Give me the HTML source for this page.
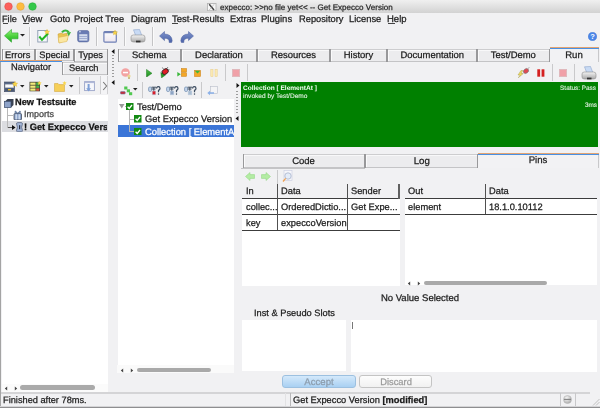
<!DOCTYPE html><html><head><meta charset="utf-8"><style>
html,body{margin:0;padding:0;}
body{width:600px;height:408px;overflow:hidden;position:relative;background:#f1f1f3;font-family:"Liberation Sans",sans-serif;}
div{-webkit-text-stroke:0.25px currentColor;text-rendering:geometricPrecision;will-change:transform;}
</style></head><body>
<div style="position:absolute;left:0px;top:0px;width:600px;height:13px;background:linear-gradient(#f0f0f0,#e4e4e4 40%,#d2d2d2);"></div><svg style="position:absolute;left:4.199999999999999px;top:2.0px" width="9" height="9" viewBox="0 0 9 9"><circle cx="4.5" cy="4.5" r="3.8" fill="#fc605c" stroke="#df4744" stroke-width="0.5"/></svg><svg style="position:absolute;left:15.899999999999999px;top:2.0px" width="9" height="9" viewBox="0 0 9 9"><circle cx="4.5" cy="4.5" r="3.8" fill="#fdbc40" stroke="#de9f34" stroke-width="0.5"/></svg><svg style="position:absolute;left:27.9px;top:2.0px" width="9" height="9" viewBox="0 0 9 9"><circle cx="4.5" cy="4.5" r="3.8" fill="#34c84a" stroke="#27aa35" stroke-width="0.5"/></svg><svg style="position:absolute;left:207px;top:2.8px" width="9.5" height="8.2" viewBox="0 0 9.5 8.2"><rect x="0.5" y="0.5" width="8.5" height="7.2" fill="#f8f8f8" stroke="#b4b4b4" stroke-width="0.9"/><path d="M2.2 1.2 L7 7" stroke="#444" stroke-width="1.5"/><path d="M7.2 1.2 L2.2 7" stroke="#999" stroke-width="0.5"/></svg><div style="left:220px;position:absolute;top:4px;font-size:8.05px;line-height:8.05px;color:#2a2a2a;font-weight:normal;white-space:pre;">expecco: &gt;&gt;no file yet&lt;&lt; -- Get Expecco Version</div><div style="left:2.3px;position:absolute;top:15px;font-size:9.2px;line-height:9.2px;color:#1e1e1e;font-weight:normal;white-space:pre;">File</div><div style="left:22px;position:absolute;top:14px;font-size:9.4px;line-height:9.4px;color:#1e1e1e;font-weight:normal;white-space:pre;">View</div><div style="left:49.6px;position:absolute;top:14px;font-size:9.4px;line-height:9.4px;color:#1e1e1e;font-weight:normal;white-space:pre;">Goto</div><div style="left:74.3px;position:absolute;top:15px;font-size:9.3px;line-height:9.3px;color:#1e1e1e;font-weight:normal;white-space:pre;">Project Tree</div><div style="left:130.5px;position:absolute;top:14px;font-size:9.4px;line-height:9.4px;color:#1e1e1e;font-weight:normal;white-space:pre;">Diagram</div><div style="left:171.6px;position:absolute;top:15px;font-size:9.5px;line-height:9.5px;color:#1e1e1e;font-weight:normal;white-space:pre;">Test-Results</div><div style="left:229.6px;position:absolute;top:15px;font-size:9.3px;line-height:9.3px;color:#1e1e1e;font-weight:normal;white-space:pre;">Extras</div><div style="left:261.3px;position:absolute;top:15px;font-size:9.5px;line-height:9.5px;color:#1e1e1e;font-weight:normal;white-space:pre;">Plugins</div><div style="left:299.3px;position:absolute;top:15px;font-size:9.3px;line-height:9.3px;color:#1e1e1e;font-weight:normal;white-space:pre;">Repository</div><div style="left:349.3px;position:absolute;top:14px;font-size:9.4px;line-height:9.4px;color:#1e1e1e;font-weight:normal;white-space:pre;">License</div><div style="left:387.3px;position:absolute;top:15px;font-size:9.5px;line-height:9.5px;color:#1e1e1e;font-weight:normal;white-space:pre;">Help</div><div style="position:absolute;left:3px;top:23px;width:5px;height:1px;background:#444;"></div><div style="position:absolute;left:23px;top:23px;width:6px;height:1px;background:#444;"></div><div style="position:absolute;left:172px;top:23px;width:6px;height:1px;background:#444;"></div><div style="position:absolute;left:388px;top:23px;width:7px;height:1px;background:#444;"></div><div style="position:absolute;left:0px;top:0px;width:1px;height:408px;background:#a4a4a4;"></div><div style="position:absolute;left:96px;top:27px;width:1px;height:19px;background:#c4c4c6;"></div><div style="position:absolute;left:97px;top:27px;width:1px;height:19px;background:#fbfbfb;"></div><div style="position:absolute;left:124px;top:27px;width:1px;height:19px;background:#c4c4c6;"></div><div style="position:absolute;left:125px;top:27px;width:1px;height:19px;background:#fbfbfb;"></div><div style="position:absolute;left:152px;top:27px;width:1px;height:19px;background:#c4c4c6;"></div><div style="position:absolute;left:153px;top:27px;width:1px;height:19px;background:#fbfbfb;"></div><svg style="position:absolute;left:3.5px;top:29px" width="15" height="14" viewBox="0 0 15 14"><defs><linearGradient id="ga" x1="0" y1="0" x2="0" y2="1"><stop offset="0" stop-color="#9cf07c"/><stop offset="0.55" stop-color="#48d03a"/><stop offset="1" stop-color="#22a822"/></linearGradient></defs><path d="M0.5 6.8 L7.5 0.4 L7.5 3.9 L14 3.9 L14 9.8 L7.5 9.8 L7.5 13.2 Z" fill="url(#ga)" stroke="#2aa82a" stroke-width="0.6"/></svg><svg style="position:absolute;left:19.5px;top:34px" width="5.5" height="3" viewBox="0 0 5.5 3"><path d="M0 0 L5 0 L2.5 2.6 Z" fill="#222"/></svg><div style="position:absolute;left:29px;top:27px;width:1px;height:19px;background:#c8c8ca;"></div><div style="position:absolute;left:30px;top:27px;width:1px;height:19px;background:#fafafa;"></div><svg style="position:absolute;left:37px;top:28.5px" width="13" height="14" viewBox="0 0 13 14"><rect x="0.8" y="1.5" width="9.5" height="11.5" fill="#f6f8fb" stroke="#8a9ab0" stroke-width="0.9"/><path d="M2.3 7.5 L5 10.8 L11 4.5" stroke="#22b622" stroke-width="2" fill="none"/><path d="M10 0.3 L10.8 2 L12.6 2.2 L11.3 3.4 L11.7 5.2 L10 4.3 L8.4 5.2 L8.8 3.4 L7.5 2.2 L9.3 2 Z" fill="#f8d64a" stroke="#d8a818" stroke-width="0.3"/></svg><svg style="position:absolute;left:56.5px;top:29px" width="15" height="15" viewBox="0 0 15 15"><path d="M1 5 L4.5 4 L6 5 L10 4.2 L10.5 11 L2 13.8 Z" fill="#e9c450" stroke="#c99a30" stroke-width="0.5"/><path d="M1.2 8.5 L11.5 6.5 L9.8 12.5 L2 14 Z" fill="#fbe7a2" stroke="#d8b048" stroke-width="0.5"/><path d="M5 3.2 Q8.5 -0.2 11.8 3.2" stroke="#3cb43c" stroke-width="2.2" fill="none"/><path d="M9.8 3.6 L14 3.0 L11.8 7.2 Z" fill="#3cb43c"/></svg><svg style="position:absolute;left:77px;top:30px" width="12.5" height="12.5" viewBox="0 0 12.5 12.5"><rect x="0.6" y="0.6" width="11.3" height="11.3" rx="1.8" fill="#6a7cb4" stroke="#55669c" stroke-width="0.6"/><rect x="2.3" y="0.8" width="1.3" height="1.6" fill="#dfe6f4"/><rect x="2.2" y="4.2" width="8.2" height="6.4" fill="#d4dcee"/><rect x="2.2" y="6.2" width="8.2" height="0.7" fill="#8a98c4"/><rect x="2.2" y="8.3" width="8.2" height="0.7" fill="#8a98c4"/></svg><svg style="position:absolute;left:102.5px;top:29.5px" width="15" height="13" viewBox="0 0 15 13"><defs><linearGradient id="gw" x1="0" y1="0" x2="0" y2="1"><stop offset="0" stop-color="#fbfbfd"/><stop offset="1" stop-color="#ece6ee"/></linearGradient></defs><rect x="0.9" y="1.6" width="12.4" height="10.6" rx="1" fill="url(#gw)" stroke="#6f80b6" stroke-width="1.2"/><rect x="0.9" y="1.6" width="12.4" height="1.6" fill="#6f80b6"/><path d="M12 0 L12.8 1.7 L14.6 1.9 L13.3 3.1 L13.7 4.9 L12 4 L10.4 4.9 L10.8 3.1 L9.5 1.9 L11.3 1.7 Z" fill="#f8d64a" stroke="#d8a818" stroke-width="0.3"/></svg><svg style="position:absolute;left:129.5px;top:28.5px" width="16" height="15" viewBox="0 0 16 15"><defs><linearGradient id="gp" x1="0" y1="0" x2="0" y2="1"><stop offset="0" stop-color="#f4f4f4"/><stop offset="1" stop-color="#a8a8a8"/></linearGradient></defs><path d="M3.5 0.8 L9.5 0.5 L12 7 L6 7.5 Z" fill="#c8daf4" stroke="#8ea6cc" stroke-width="0.6"/><path d="M1 8 Q1 6 3.5 6 L12.5 6 Q15 6 15 8.5 L15 11 Q15 13 12.5 13 L3.5 13 Q1 13 1 11 Z" fill="url(#gp)" stroke="#8c8c8c" stroke-width="0.6"/><rect x="6" y="11.6" width="4.5" height="1.8" fill="#333"/></svg><svg style="position:absolute;left:159px;top:30.5px" width="14" height="12" viewBox="0 0 14 12"><defs><linearGradient id="gu" x1="0" y1="0" x2="0" y2="1"><stop offset="0" stop-color="#7d92cc"/><stop offset="1" stop-color="#4a62a8"/></linearGradient></defs><path d="M0.5 5 L5.5 0.5 L5.5 3 Q12.8 3.2 13.2 9.8 L12.6 11.5 L10.2 11.5 Q10.6 7.2 5.5 7.2 L5.5 9.6 Z" fill="url(#gu)" stroke="#4a5e9c" stroke-width="0.5"/></svg><svg style="position:absolute;left:180px;top:30.5px" width="14" height="12" viewBox="0 0 14 12"><path d="M13.5 5 L8.5 0.5 L8.5 3 Q1.2 3.2 0.8 9.8 L1.4 11.5 L3.8 11.5 Q3.4 7.2 8.5 7.2 L8.5 9.6 Z" fill="url(#gu)" stroke="#4a5e9c" stroke-width="0.5"/></svg><svg style="position:absolute;left:587.5px;top:31.5px" width="9" height="9" viewBox="0 0 9 9"><circle cx="4.5" cy="4.5" r="4.3" fill="#4a86e8" stroke="#3a70cc" stroke-width="0.4"/><text x="4.5" y="7.4" font-size="7.5" font-weight="bold" fill="#fff" text-anchor="middle" font-family="Liberation Sans">?</text></svg><div style="position:absolute;left:2px;top:49px;width:33px;height:12px;background:#ececee;box-sizing:border-box;border-top:1px solid #cdcdcf;border-bottom:1px solid #c4c4c6;"></div><div style="position:absolute;left:2px;top:50px;width:33px;height:1px;background:#f8f8f9;"></div><div style="position:absolute;left:2px;top:49px;width:1px;height:12px;background:#98989a;"></div><div style="position:absolute;left:3px;top:50px;width:1px;height:10px;background:#fafafb;"></div><div style="position:absolute;left:34px;top:49px;width:1px;height:12px;background:#98989a;"></div><div style="left:5.3px;position:absolute;top:51px;font-size:9.3px;line-height:9.3px;color:#1c1c1c;font-weight:normal;white-space:pre;">Errors</div><div style="position:absolute;left:35px;top:49px;width:39px;height:12px;background:#ececee;box-sizing:border-box;border-top:1px solid #cdcdcf;border-bottom:1px solid #c4c4c6;"></div><div style="position:absolute;left:35px;top:50px;width:39px;height:1px;background:#f8f8f9;"></div><div style="position:absolute;left:35px;top:49px;width:1px;height:12px;background:#98989a;"></div><div style="position:absolute;left:36px;top:50px;width:1px;height:10px;background:#fafafb;"></div><div style="position:absolute;left:73px;top:49px;width:1px;height:12px;background:#98989a;"></div><div style="left:35.3px;width:39.10000000000001px;text-align:center;position:absolute;top:51px;font-size:9.3px;line-height:9.3px;color:#1c1c1c;font-weight:normal;white-space:pre;">Special</div><div style="position:absolute;left:74px;top:49px;width:34px;height:13px;background:#ececee;box-sizing:border-box;border-top:1px solid #cdcdcf;border-bottom:1px solid #c4c4c6;"></div><div style="position:absolute;left:74px;top:50px;width:34px;height:1px;background:#f8f8f9;"></div><div style="position:absolute;left:74px;top:49px;width:1px;height:13px;background:#98989a;"></div><div style="position:absolute;left:75px;top:50px;width:1px;height:11px;background:#fafafb;"></div><div style="position:absolute;left:107px;top:49px;width:1px;height:13px;background:#98989a;"></div><div style="left:74.4px;width:33.099999999999994px;text-align:center;position:absolute;top:51px;font-size:9.3px;line-height:9.3px;color:#1c1c1c;font-weight:normal;white-space:pre;">Types</div><div style="position:absolute;left:0px;top:60px;width:62px;height:1px;background:#e2a472;"></div><div style="position:absolute;left:0px;top:61px;width:62px;height:1px;background:#4a90e2;"></div><div style="left:10.5px;position:absolute;top:62px;font-size:9.4px;line-height:9.4px;color:#1c1c1c;font-weight:normal;white-space:pre;">Navigator</div><div style="position:absolute;left:62px;top:62px;width:46px;height:13px;background:#ececee;box-sizing:border-box;border-top:1px solid #cdcdcf;border-bottom:1px solid #c4c4c6;"></div><div style="position:absolute;left:62px;top:63px;width:46px;height:1px;background:#f8f8f9;"></div><div style="position:absolute;left:62px;top:62px;width:1px;height:13px;background:#98989a;"></div><div style="position:absolute;left:63px;top:63px;width:1px;height:11px;background:#fafafb;"></div><div style="position:absolute;left:107px;top:62px;width:1px;height:13px;background:#98989a;"></div><div style="left:69.3px;position:absolute;top:64px;font-size:9.3px;line-height:9.3px;color:#1c1c1c;font-weight:normal;white-space:pre;">Search</div><svg style="position:absolute;left:4px;top:80.5px" width="14" height="11.5" viewBox="0 0 14 11.5"><rect x="0.5" y="1" width="10" height="9.8" fill="#5a6a88" stroke="#3c475c" stroke-width="0.6"/><rect x="1.2" y="3.4" width="8.6" height="3.2" fill="#fafafa"/><rect x="1.2" y="7.4" width="8.6" height="2.6" fill="#4a5874"/><rect x="4" y="8" width="3" height="1.4" fill="#f0c020"/><path d="M11 0.2 L11.8 2 L13.7 2.2 L12.3 3.5 L12.7 5.4 L11 4.4 L9.3 5.4 L9.7 3.5 L8.3 2.2 L10.2 2 Z" fill="#f8d64a" stroke="#d8a818" stroke-width="0.3"/></svg><svg style="position:absolute;left:20px;top:85px" width="5" height="3" viewBox="0 0 5 3"><path d="M0 0 L4.5 0 L2.25 2.6 Z" fill="#222"/></svg><svg style="position:absolute;left:29px;top:81px" width="13" height="11" viewBox="0 0 13 11"><rect x="0.5" y="0.8" width="10.5" height="9.5" fill="#4a4a3a" /><rect x="1.3" y="1.6" width="5.2" height="2.2" fill="#f4ec7a"/><rect x="1.3" y="4.6" width="5.2" height="2.2" fill="#f4ec7a"/><rect x="1.3" y="7.5" width="5.2" height="2.2" fill="#f4ec7a"/><rect x="7.2" y="1.6" width="3" height="2.2" fill="#48b848"/><rect x="7.2" y="4.6" width="3" height="2.2" fill="#48b848"/><rect x="7.2" y="7.5" width="3" height="2.2" fill="#e05a3a"/><path d="M10.5 0 L11.1 1.3 L12.6 1.5 L11.5 2.5 L11.8 4 L10.5 3.3 L9.2 4 L9.5 2.5 L8.4 1.5 L9.9 1.3 Z" fill="#f8d64a"/></svg><svg style="position:absolute;left:44px;top:85px" width="5" height="3" viewBox="0 0 5 3"><path d="M0 0 L4.5 0 L2.25 2.6 Z" fill="#222"/></svg><svg style="position:absolute;left:54px;top:81px" width="13" height="11" viewBox="0 0 13 11"><path d="M0.5 2.5 L4 2.5 L5 3.6 L10.5 3.6 L10.5 10.5 L0.5 10.5 Z" fill="#f6cf58" stroke="#cf9e30" stroke-width="0.5"/><path d="M10.5 0 L11.1 1.3 L12.6 1.5 L11.5 2.5 L11.8 4 L10.5 3.3 L9.2 4 L9.5 2.5 L8.4 1.5 L9.9 1.3 Z" fill="#f8d64a"/></svg><svg style="position:absolute;left:69px;top:85px" width="5" height="3" viewBox="0 0 5 3"><path d="M0 0 L4.5 0 L2.25 2.6 Z" fill="#222"/></svg><div style="position:absolute;left:79px;top:77px;width:1px;height:17px;background:#c9c9cb;"></div><svg style="position:absolute;left:84px;top:80.5px" width="11" height="11.5" viewBox="0 0 11 11.5"><rect x="0.6" y="0.6" width="9.8" height="9" fill="#f6f7fb" stroke="#9aa4c8" stroke-width="0.9"/><rect x="0.6" y="0.6" width="9.8" height="1.5" fill="#b0b8d8"/><rect x="3.6" y="3" width="2" height="5.5" fill="#7ea0d8"/><path d="M2.2 7.2 L4.6 10.6 L7 7.2 Z" fill="#7ea0d8"/></svg><div style="position:absolute;left:100px;top:76px;width:8px;height:18px;background:#f4f4f6;box-sizing:border-box;border-left:1px solid #d0d0d2;border-right:1px solid #d0d0d2;"></div><svg style="position:absolute;left:101.5px;top:81px" width="6" height="10" viewBox="0 0 6 10"><path d="M1.2 1 L4.6 5 L1.2 9" stroke="#7a7a7a" stroke-width="1.1" fill="none"/></svg><div style="position:absolute;left:2px;top:95px;width:106px;height:297px;background:#fff;"></div><div style="position:absolute;left:2px;top:384px;width:106px;height:8px;background:#fbfbfb;"></div><div style="position:absolute;left:2px;top:121px;width:106px;height:11px;background:#dcdde1;"></div><div style="position:absolute;left:7px;top:107px;width:1px;height:21px;background:#b8b8b8;"></div><div style="position:absolute;left:8px;top:115px;width:5px;height:1px;background:#b8b8b8;"></div><div style="position:absolute;left:8px;top:127px;width:5px;height:1px;background:#555;"></div><svg style="position:absolute;left:12px;top:125px" width="4" height="5" viewBox="0 0 4 5"><path d="M0 0 L3.6 2.5 L0 5 Z" fill="#111"/></svg><svg style="position:absolute;left:3.5px;top:98px" width="10" height="10" viewBox="0 0 10 10"><path d="M1 3.5 L3.5 1 L9.5 1 L9.5 7 L7 9.5 Z" fill="#3a4252"/><rect x="0.5" y="3.3" width="6.5" height="6.3" fill="#8ea3c9" stroke="#3a4a6a" stroke-width="0.7"/></svg><svg style="position:absolute;left:12.5px;top:109.5px" width="9.5" height="10.5" viewBox="0 0 9.5 10.5"><rect x="1" y="3.6" width="7.5" height="6.3" rx="0.8" fill="#8fa6cc" stroke="#2e3648" stroke-width="0.7"/><rect x="2.6" y="4.2" width="1.2" height="5.2" fill="#d8e4f6"/><rect x="5.6" y="4.2" width="1.2" height="5.2" fill="#d8e4f6"/><path d="M4.7 3.4 Q2 -0.5 1.8 2.2 Q2 3.4 4.7 3.4 Q7.4 -0.5 7.6 2.2 Q7.4 3.4 4.7 3.4" fill="#7c98c0" stroke="#4a5e80" stroke-width="0.5"/></svg><svg style="position:absolute;left:16px;top:121.5px" width="7" height="10.5" viewBox="0 0 7 10.5"><path d="M1.5 0.6 L5.5 0.6 Q6.6 0.6 6.4 2.2 L5.6 5.2 L6.4 8.2 Q6.6 9.8 5.5 9.8 L1.5 9.8 Q0.4 9.8 0.6 8.2 L1.4 5.2 L0.6 2.2 Q0.4 0.6 1.5 0.6 Z" fill="#a4b6d8" stroke="#4a5670" stroke-width="0.7"/><rect x="3" y="3.2" width="1.2" height="4" fill="#2a3040"/></svg><div style="left:15.3px;position:absolute;top:98px;font-size:9.26px;line-height:9.26px;color:#111;font-weight:bold;white-space:pre;">New Testsuite</div><div style="left:24.3px;position:absolute;top:110px;font-size:9.0px;line-height:9.0px;color:#444;font-weight:normal;white-space:pre;">Imports</div><div style="left:24.3px;position:absolute;top:123px;font-size:9.3px;line-height:9.3px;color:#111;font-weight:bold;white-space:pre;width:83px;overflow:hidden;">! Get Expecco Vers</div><svg style="position:absolute;left:4px;top:385.5px" width="4" height="5" viewBox="0 0 4 5"><path d="M3.2 0.5 L0.8 2.5 L3.2 4.5 Z" fill="#444"/></svg><svg style="position:absolute;left:14px;top:385.5px" width="4" height="5" viewBox="0 0 4 5"><path d="M0.8 0.5 L3.2 2.5 L0.8 4.5 Z" fill="#444"/></svg><div style="position:absolute;left:20px;top:385px;width:75px;height:5px;background:#aaaaaa;border-radius:2.5px;"></div><svg style="position:absolute;left:110.5px;top:48.5px" width="4" height="5" viewBox="0 0 4 5"><path d="M3.5 0 L0.5 2.5 L3.5 5 Z" fill="#111"/></svg><div style="position:absolute;left:112px;top:55px;width:2px;height:1px;background:#9c9c9c;"></div><div style="position:absolute;left:112px;top:58px;width:2px;height:1px;background:#9c9c9c;"></div><div style="position:absolute;left:112px;top:61px;width:2px;height:1px;background:#9c9c9c;"></div><div style="position:absolute;left:112px;top:64px;width:2px;height:1px;background:#9c9c9c;"></div><div style="position:absolute;left:112px;top:67px;width:2px;height:1px;background:#9c9c9c;"></div><div style="position:absolute;left:112px;top:70px;width:2px;height:1px;background:#9c9c9c;"></div><div style="position:absolute;left:112px;top:73px;width:2px;height:1px;background:#9c9c9c;"></div><div style="position:absolute;left:112px;top:76px;width:2px;height:1px;background:#9c9c9c;"></div><svg style="position:absolute;left:110.5px;top:79.5px" width="4" height="5" viewBox="0 0 4 5"><path d="M3.5 0 L0.5 2.5 L3.5 5 Z" fill="#111"/></svg><div style="position:absolute;left:118px;top:49px;width:63px;height:13px;background:#ececee;box-sizing:border-box;border-top:1px solid #cdcdcf;border-bottom:1px solid #c4c4c6;"></div><div style="position:absolute;left:118px;top:50px;width:63px;height:1px;background:#f8f8f9;"></div><div style="position:absolute;left:118px;top:49px;width:1px;height:13px;background:#98989a;"></div><div style="position:absolute;left:119px;top:50px;width:1px;height:11px;background:#fafafb;"></div><div style="position:absolute;left:180px;top:49px;width:1px;height:13px;background:#98989a;"></div><div style="left:118.30000000000001px;width:62.500000000000014px;text-align:center;position:absolute;top:51px;font-size:9.45px;line-height:9.45px;color:#1c1c1c;font-weight:normal;white-space:pre;">Schema</div><div style="position:absolute;left:181px;top:49px;width:76px;height:13px;background:#ececee;box-sizing:border-box;border-top:1px solid #cdcdcf;border-bottom:1px solid #c4c4c6;"></div><div style="position:absolute;left:181px;top:50px;width:76px;height:1px;background:#f8f8f9;"></div><div style="position:absolute;left:181px;top:49px;width:1px;height:13px;background:#98989a;"></div><div style="position:absolute;left:182px;top:50px;width:1px;height:11px;background:#fafafb;"></div><div style="position:absolute;left:256px;top:49px;width:1px;height:13px;background:#98989a;"></div><div style="left:180.8px;width:75.89999999999998px;text-align:center;position:absolute;top:51px;font-size:9.45px;line-height:9.45px;color:#1c1c1c;font-weight:normal;white-space:pre;">Declaration</div><div style="position:absolute;left:257px;top:49px;width:73px;height:13px;background:#ececee;box-sizing:border-box;border-top:1px solid #cdcdcf;border-bottom:1px solid #c4c4c6;"></div><div style="position:absolute;left:257px;top:50px;width:73px;height:1px;background:#f8f8f9;"></div><div style="position:absolute;left:257px;top:49px;width:1px;height:13px;background:#98989a;"></div><div style="position:absolute;left:258px;top:50px;width:1px;height:11px;background:#fafafb;"></div><div style="position:absolute;left:329px;top:49px;width:1px;height:13px;background:#98989a;"></div><div style="left:256.69999999999993px;width:72.90000000000003px;text-align:center;position:absolute;top:51px;font-size:9.45px;line-height:9.45px;color:#1c1c1c;font-weight:normal;white-space:pre;">Resources</div><div style="position:absolute;left:330px;top:49px;width:57px;height:13px;background:#ececee;box-sizing:border-box;border-top:1px solid #cdcdcf;border-bottom:1px solid #c4c4c6;"></div><div style="position:absolute;left:330px;top:50px;width:57px;height:1px;background:#f8f8f9;"></div><div style="position:absolute;left:330px;top:49px;width:1px;height:13px;background:#98989a;"></div><div style="position:absolute;left:331px;top:50px;width:1px;height:11px;background:#fafafb;"></div><div style="position:absolute;left:386px;top:49px;width:1px;height:13px;background:#98989a;"></div><div style="left:329.6px;width:56.89999999999998px;text-align:center;position:absolute;top:51px;font-size:9.45px;line-height:9.45px;color:#1c1c1c;font-weight:normal;white-space:pre;">History</div><div style="position:absolute;left:387px;top:49px;width:90px;height:13px;background:#ececee;box-sizing:border-box;border-top:1px solid #cdcdcf;border-bottom:1px solid #c4c4c6;"></div><div style="position:absolute;left:387px;top:50px;width:90px;height:1px;background:#f8f8f9;"></div><div style="position:absolute;left:387px;top:49px;width:1px;height:13px;background:#98989a;"></div><div style="position:absolute;left:388px;top:50px;width:1px;height:11px;background:#fafafb;"></div><div style="position:absolute;left:476px;top:49px;width:1px;height:13px;background:#98989a;"></div><div style="left:386.5px;width:90.5px;text-align:center;position:absolute;top:51px;font-size:9.45px;line-height:9.45px;color:#1c1c1c;font-weight:normal;white-space:pre;">Documentation</div><div style="position:absolute;left:477px;top:49px;width:73px;height:13px;background:#ececee;box-sizing:border-box;border-top:1px solid #cdcdcf;border-bottom:1px solid #c4c4c6;"></div><div style="position:absolute;left:477px;top:50px;width:73px;height:1px;background:#f8f8f9;"></div><div style="position:absolute;left:477px;top:49px;width:1px;height:13px;background:#98989a;"></div><div style="position:absolute;left:478px;top:50px;width:1px;height:11px;background:#fafafb;"></div><div style="position:absolute;left:549px;top:49px;width:1px;height:13px;background:#98989a;"></div><div style="left:476.99999999999994px;width:72.60000000000002px;text-align:center;position:absolute;top:51px;font-size:9.45px;line-height:9.45px;color:#1c1c1c;font-weight:normal;white-space:pre;">Test/Demo</div><div style="position:absolute;left:550px;top:47px;width:49px;height:15px;background:#f2f2f4;box-sizing:border-box;border-right:1px solid #c8c8ca;"></div><div style="position:absolute;left:550px;top:47px;width:49px;height:1px;background:#e2a472;"></div><div style="position:absolute;left:550px;top:48px;width:49px;height:1px;background:#4a90e2;"></div><div style="left:549.3px;width:50px;text-align:center;position:absolute;top:51px;font-size:9.6px;line-height:9.6px;color:#1c1c1c;font-weight:normal;white-space:pre;">Run</div><svg style="position:absolute;left:120.5px;top:67.5px" width="10" height="11" viewBox="0 0 10 11"><circle cx="4.5" cy="4.5" r="4.3" fill="#f3a3a3"/><rect x="2" y="3.8" width="5" height="1.5" fill="#fff"/><circle cx="8" cy="8" r="1.6" fill="#e8d890"/><rect x="7" y="9.3" width="2" height="1.5" fill="#c0b070"/></svg><div style="position:absolute;left:137px;top:64px;width:1px;height:17px;background:#c9c9cb;"></div><svg style="position:absolute;left:146px;top:68.8px" width="6.5" height="8.6" viewBox="0 0 6.5 8.6"><defs><linearGradient id="gpl" x1="0" y1="0" x2="0" y2="1"><stop offset="0" stop-color="#4cc04c"/><stop offset="1" stop-color="#1e8a1e"/></linearGradient></defs><path d="M0.5 0.5 L6 4.3 L0.5 8.1 Z" fill="url(#gpl)" stroke="#1d7a1d" stroke-width="0.5"/></svg><svg style="position:absolute;left:160px;top:66.5px" width="9.5" height="11.5" viewBox="0 0 9.5 11.5"><path d="M0.8 5.5 L5.5 8 L1.5 11 Z" fill="#2a9a2a" stroke="#1d6a1d" stroke-width="0.4"/><ellipse cx="5.2" cy="4.6" rx="3.3" ry="2.6" transform="rotate(-35 5.2 4.6)" fill="#e01e26" stroke="#222" stroke-width="0.8"/><path d="M6.5 1.6 L8.2 0.3 M8 3.2 L9.3 2.6 M3.2 1.8 L2.5 0.6" stroke="#222" stroke-width="0.7"/></svg><svg style="position:absolute;left:176.5px;top:68px" width="10" height="9" viewBox="0 0 10 9"><path d="M0.3 4 L3.8 6.2 L0.3 8.5 Z" fill="#3cb83c"/><rect x="4.3" y="0.5" width="5.3" height="3.6" fill="#f4a828" stroke="#c8801a" stroke-width="0.5"/><rect x="4.3" y="4.8" width="5.3" height="3.6" fill="#f4a828" stroke="#c8801a" stroke-width="0.5"/></svg><svg style="position:absolute;left:194px;top:70px" width="7" height="7" viewBox="0 0 7 7"><rect x="0.4" y="0.4" width="6.2" height="6.2" fill="#f4a828" stroke="#c8801a" stroke-width="0.5"/><path d="M0.8 0.8 L6.2 0.8 L3.5 3.6 Z" fill="#3cb83c"/></svg><svg style="position:absolute;left:209.5px;top:69px" width="8" height="8" viewBox="0 0 8 8"><rect x="0.8" y="0.3" width="2.2" height="7.3" fill="#fbeab4" stroke="#e8cc88" stroke-width="0.5"/><rect x="5" y="0.3" width="2.2" height="7.3" fill="#fbeab4" stroke="#e8cc88" stroke-width="0.5"/></svg><div style="position:absolute;left:225px;top:64px;width:1px;height:17px;background:#c9c9cb;"></div><svg style="position:absolute;left:232px;top:69px" width="8" height="8" viewBox="0 0 8 8"><rect x="0.5" y="0.5" width="7" height="7" fill="#f0a0a8" stroke="#e0b8bc" stroke-width="1"/></svg><div style="position:absolute;left:247px;top:64px;width:1px;height:17px;background:#c9c9cb;"></div><svg style="position:absolute;left:516.5px;top:67px" width="13" height="11" viewBox="0 0 13 11"><path d="M4 3.5 L1 8 L3.3 8 L1.3 10.8 L6.3 6.5 L4 6.5 L5.8 3.5 Z" fill="#f0e060" stroke="#a09040" stroke-width="0.4"/><ellipse cx="9" cy="4" rx="2.8" ry="2.2" transform="rotate(-35 9 4)" fill="#e04850" stroke="#777" stroke-width="0.6"/><path d="M11 1.5 L12.5 0.3" stroke="#777" stroke-width="0.6"/></svg><svg style="position:absolute;left:536.5px;top:69px" width="8" height="8" viewBox="0 0 8 8"><rect x="0.3" y="0.3" width="2.8" height="7.4" fill="#d42020"/><rect x="4.6" y="0.3" width="2.8" height="7.4" fill="#d42020"/></svg><div style="position:absolute;left:552px;top:64px;width:1px;height:17px;background:#c9c9cb;"></div><svg style="position:absolute;left:559px;top:69px" width="8" height="8" viewBox="0 0 8 8"><rect x="0.5" y="0.5" width="7" height="7" fill="#f0a0a8" stroke="#e0b8bc" stroke-width="1"/></svg><div style="position:absolute;left:574px;top:64px;width:1px;height:17px;background:#c9c9cb;"></div><svg style="position:absolute;left:580.5px;top:65.5px" width="16" height="15" viewBox="0 0 16 15"><path d="M3.5 0.8 L9.5 0.5 L12 7 L6 7.5 Z" fill="#c8daf4" stroke="#8ea6cc" stroke-width="0.6"/><path d="M1 8 Q1 6 3.5 6 L12.5 6 Q15 6 15 8.5 L15 11 Q15 13 12.5 13 L3.5 13 Q1 13 1 11 Z" fill="url(#gp)" stroke="#8c8c8c" stroke-width="0.6"/><rect x="6" y="11.6" width="4.5" height="1.8" fill="#333"/></svg><svg style="position:absolute;left:120px;top:86px" width="13" height="10" viewBox="0 0 13 10"><rect x="0.3" y="5.5" width="5" height="2.6" rx="1" fill="#c03040" stroke="#6a7aa0" stroke-width="0.5"/><rect x="4.2" y="0.5" width="3.2" height="3" fill="#50c850"/><rect x="6.8" y="3.3" width="3.2" height="3" fill="#50c850"/><rect x="9" y="6.2" width="3.2" height="3" fill="#50c850"/></svg><svg style="position:absolute;left:133.4px;top:88px" width="5" height="3" viewBox="0 0 5 3"><path d="M0 0 L4.5 0 L2.25 2.6 Z" fill="#222"/></svg><div style="position:absolute;left:142px;top:82px;width:1px;height:16px;background:#c9c9cb;"></div><svg style="position:absolute;left:148px;top:86px" width="12.5" height="10" viewBox="0 0 12.5 10"><rect x="0.6" y="1" width="3" height="4.5" rx="1.2" fill="#c4d4ea" stroke="#6a88aa" stroke-width="0.7"/><path d="M3.6 1.2 L8 1.2 M5.8 1.2 L5.8 5 M3.6 3 L7.5 3" stroke="#3a4a5e" stroke-width="1"/><rect x="4.2" y="5" width="3.6" height="3.8" fill="#d81e2a" stroke="#b8c8dc" stroke-width="0.6"/><path d="M8.6 2.6 Q8.6 0.6 10.3 0.6 Q12 0.6 12 2.4 Q12 3.6 10.5 4.4 L10.5 6.2" stroke="#3a4a5e" stroke-width="1.2" fill="none"/><rect x="9.9" y="7.4" width="1.2" height="1.3" fill="#3a4a5e"/></svg><svg style="position:absolute;left:166px;top:86px" width="12.5" height="10" viewBox="0 0 12.5 10"><rect x="0.6" y="1" width="3" height="4.5" rx="1.2" fill="#c4d4ea" stroke="#6a88aa" stroke-width="0.7"/><path d="M3.6 1.2 L8 1.2 M5.8 1.2 L5.8 5 M3.6 3 L7.5 3" stroke="#3a4a5e" stroke-width="1"/><rect x="4.2" y="5" width="3.6" height="3.8" fill="#8ea4c4" stroke="#b8c8dc" stroke-width="0.6"/><path d="M8.6 2.6 Q8.6 0.6 10.3 0.6 Q12 0.6 12 2.4 Q12 3.6 10.5 4.4 L10.5 6.2" stroke="#3a4a5e" stroke-width="1.2" fill="none"/><rect x="9.9" y="7.4" width="1.2" height="1.3" fill="#3a4a5e"/></svg><svg style="position:absolute;left:184px;top:86px" width="12.5" height="10" viewBox="0 0 12.5 10"><rect x="0.6" y="1" width="3" height="4.5" rx="1.2" fill="#c4d4ea" stroke="#6a88aa" stroke-width="0.7"/><path d="M3.6 1.2 L8 1.2 M5.8 1.2 L5.8 5 M3.6 3 L7.5 3" stroke="#3a4a5e" stroke-width="1"/><rect x="4.2" y="5" width="3.6" height="3.8" fill="#a8bcd0" stroke="#b8c8dc" stroke-width="0.6"/><path d="M8.6 2.6 Q8.6 0.6 10.3 0.6 Q12 0.6 12 2.4 Q12 3.6 10.5 4.4 L10.5 6.2" stroke="#3a4a5e" stroke-width="1.2" fill="none"/><rect x="9.9" y="7.4" width="1.2" height="1.3" fill="#3a4a5e"/></svg><div style="position:absolute;left:201px;top:82px;width:1px;height:16px;background:#c9c9cb;"></div><svg style="position:absolute;left:207px;top:86px" width="11" height="10" viewBox="0 0 11 10"><rect x="3.5" y="0.5" width="7" height="7" fill="#f4f4f6" stroke="#b8bcc8" stroke-width="0.6"/><path d="M0.3 7 L3 4.8 L3 6.2 L7 6.2 L7 7.8 L3 7.8 L3 9.2 Z" fill="#8ab0e8"/></svg><div style="position:absolute;left:118px;top:99px;width:116px;height:274px;background:#fff;"></div><div style="position:absolute;left:117px;top:365px;width:117px;height:8px;background:#fafafa;"></div><div style="position:absolute;left:118px;top:125px;width:116px;height:12px;background:#3b75d7;"></div><svg style="position:absolute;left:119px;top:104px" width="6" height="5" viewBox="0 0 6 5"><path d="M0 0 L5.5 0 L2.75 4.5 Z" fill="#9a9a9a"/></svg><div style="position:absolute;left:125px;top:106px;width:1px;height:1px;background:#aaa;"></div><svg style="position:absolute;left:126px;top:102.5px" width="7.5" height="7.5" viewBox="0 0 7.5 7.5"><rect x="0" y="0" width="7.5" height="7.5" fill="#138a13"/><path d="M1.6 3.8 L3.2 5.5 L6 2" stroke="#fff" stroke-width="1.3" fill="none"/></svg><div style="position:absolute;left:129px;top:110px;width:1px;height:22px;background:#b4b4b4;"></div><div style="position:absolute;left:130px;top:119px;width:4px;height:1px;background:#b4b4b4;"></div><div style="position:absolute;left:130px;top:131px;width:4px;height:1px;background:#b4b4b4;"></div><svg style="position:absolute;left:134px;top:115.2px" width="7.5" height="7.5" viewBox="0 0 7.5 7.5"><rect x="0" y="0" width="7.5" height="7.5" fill="#138a13"/><path d="M1.6 3.8 L3.2 5.5 L6 2" stroke="#fff" stroke-width="1.3" fill="none"/></svg><svg style="position:absolute;left:134px;top:127.6px" width="7.5" height="7.5" viewBox="0 0 7.5 7.5"><rect x="0" y="0" width="7.5" height="7.5" fill="#138a13"/><path d="M1.6 3.8 L3.2 5.5 L6 2" stroke="#fff" stroke-width="1.3" fill="none"/></svg><div style="left:136.8px;position:absolute;top:102px;font-size:9.4px;line-height:9.4px;color:#1c1c1c;font-weight:normal;white-space:pre;">Test/Demo</div><div style="left:145px;position:absolute;top:115px;font-size:9.36px;line-height:9.36px;color:#1c1c1c;font-weight:normal;white-space:pre;width:88px;overflow:hidden;">Get Expecco Version</div><div style="left:145px;position:absolute;top:128px;font-size:9.36px;line-height:9.36px;color:#ffffff;font-weight:normal;white-space:pre;width:88.6px;overflow:hidden;">Collection [ ElementAt ]</div><svg style="position:absolute;left:120px;top:368px" width="4" height="5" viewBox="0 0 4 5"><path d="M3.2 0.5 L0.8 2.5 L3.2 4.5 Z" fill="#444"/></svg><svg style="position:absolute;left:130px;top:368px" width="4" height="5" viewBox="0 0 4 5"><path d="M0.8 0.5 L3.2 2.5 L0.8 4.5 Z" fill="#444"/></svg><div style="position:absolute;left:137px;top:368px;width:74px;height:4px;background:#a9a9a9;border-radius:2px;"></div><svg style="position:absolute;left:235.5px;top:83px" width="4" height="5" viewBox="0 0 4 5"><path d="M0.5 0 L3.5 2.5 L0.5 5 Z" fill="#111"/></svg><div style="position:absolute;left:236px;top:91px;width:2px;height:1px;background:#9c9c9c;"></div><div style="position:absolute;left:236px;top:94px;width:2px;height:1px;background:#9c9c9c;"></div><div style="position:absolute;left:236px;top:97px;width:2px;height:1px;background:#9c9c9c;"></div><div style="position:absolute;left:236px;top:100px;width:2px;height:1px;background:#9c9c9c;"></div><div style="position:absolute;left:236px;top:103px;width:2px;height:1px;background:#9c9c9c;"></div><div style="position:absolute;left:236px;top:106px;width:2px;height:1px;background:#9c9c9c;"></div><div style="position:absolute;left:236px;top:109px;width:2px;height:1px;background:#9c9c9c;"></div><div style="position:absolute;left:236px;top:112px;width:2px;height:1px;background:#9c9c9c;"></div><svg style="position:absolute;left:235px;top:115.5px" width="4" height="5" viewBox="0 0 4 5"><path d="M3.5 0 L0.5 2.5 L3.5 5 Z" fill="#111"/></svg><div style="position:absolute;left:241px;top:82px;width:357px;height:65px;background:#008000;"></div><div style="left:243px;position:absolute;top:86px;font-size:6.56px;line-height:6.56px;color:#f4fff4;font-weight:bold;white-space:pre;-webkit-text-stroke:0;">Collection [ ElementAt ]</div><div style="left:243px;position:absolute;top:94px;font-size:6.57px;line-height:6.57px;color:#e4f2e4;font-weight:normal;white-space:pre;-webkit-text-stroke:0.1px currentColor;">invoked by Test/Demo</div><div style="left:195.5px;width:400px;text-align:right;position:absolute;top:86px;font-size:6.4px;line-height:6.4px;color:#e4f2e4;font-weight:normal;white-space:pre;-webkit-text-stroke:0.1px currentColor;">Status: Pass</div><div style="left:196.70000000000005px;width:400px;text-align:right;position:absolute;top:103px;font-size:6.4px;line-height:6.4px;color:#e4f2e4;font-weight:normal;white-space:pre;-webkit-text-stroke:0.1px currentColor;">3ms</div><div style="position:absolute;left:243px;top:154px;width:122px;height:14px;background:#ececee;box-sizing:border-box;border-top:1px solid #cdcdcf;border-bottom:1px solid #c4c4c6;"></div><div style="position:absolute;left:243px;top:155px;width:122px;height:1px;background:#f8f8f9;"></div><div style="position:absolute;left:243px;top:154px;width:1px;height:14px;background:#98989a;"></div><div style="position:absolute;left:244px;top:155px;width:1px;height:12px;background:#fafafb;"></div><div style="position:absolute;left:364px;top:154px;width:1px;height:14px;background:#98989a;"></div><div style="left:243.39999999999998px;width:121.1px;text-align:center;position:absolute;top:157px;font-size:9.5px;line-height:9.5px;color:#1c1c1c;font-weight:normal;white-space:pre;">Code</div><div style="position:absolute;left:365px;top:154px;width:113px;height:14px;background:#ececee;box-sizing:border-box;border-top:1px solid #cdcdcf;border-bottom:1px solid #c4c4c6;"></div><div style="position:absolute;left:365px;top:155px;width:113px;height:1px;background:#f8f8f9;"></div><div style="position:absolute;left:365px;top:154px;width:1px;height:14px;background:#98989a;"></div><div style="position:absolute;left:366px;top:155px;width:1px;height:12px;background:#fafafb;"></div><div style="position:absolute;left:477px;top:154px;width:1px;height:14px;background:#98989a;"></div><div style="left:364.5px;width:113.5px;text-align:center;position:absolute;top:157px;font-size:9.7px;line-height:9.7px;color:#1c1c1c;font-weight:normal;white-space:pre;">Log</div><div style="position:absolute;left:241px;top:168px;width:124px;height:1px;background:#c4c4c6;"></div><div style="position:absolute;left:478px;top:153px;width:121px;height:15px;background:#f2f2f4;box-sizing:border-box;border-right:1px solid #c8c8ca;"></div><div style="position:absolute;left:478px;top:153px;width:121px;height:1px;background:#e2a472;"></div><div style="position:absolute;left:478px;top:154px;width:121px;height:1px;background:#4a90e2;"></div><div style="left:498.4px;width:80px;text-align:center;position:absolute;top:156px;font-size:9.6px;line-height:9.6px;color:#1c1c1c;font-weight:normal;white-space:pre;">Pins</div><svg style="position:absolute;left:245px;top:172px" width="10" height="9" viewBox="0 0 10 9"><path d="M0.5 4.5 L5 0.5 L5 2.6 L9.5 2.6 L9.5 6.4 L5 6.4 L5 8.5 Z" fill="#b4eca4" stroke="#8cd47c" stroke-width="0.5"/></svg><svg style="position:absolute;left:261.3px;top:172px" width="10" height="9" viewBox="0 0 10 9"><path d="M9.5 4.5 L5 0.5 L5 2.6 L0.5 2.6 L0.5 6.4 L5 6.4 L5 8.5 Z" fill="#b4eca4" stroke="#8cd47c" stroke-width="0.5"/></svg><div style="position:absolute;left:277px;top:170px;width:1px;height:14px;background:#c9c9cb;"></div><svg style="position:absolute;left:282px;top:170px" width="12" height="13" viewBox="0 0 12 13"><rect x="2" y="0.5" width="8" height="10" fill="#f6f6fa" stroke="#c8cce0" stroke-width="0.6"/><circle cx="6" cy="6" r="3.2" fill="#e4ecf8" stroke="#a8b4cc" stroke-width="0.8"/><path d="M3.7 8.4 L1 11.5" stroke="#f0a050" stroke-width="1.3"/></svg><div style="position:absolute;left:242px;top:198px;width:158px;height:88px;background:#fff;"></div><div style="position:absolute;left:242px;top:198px;width:158px;height:1px;background:#3c3c3c;"></div><div style="position:absolute;left:242px;top:214px;width:158px;height:1px;background:#3c3c3c;"></div><div style="position:absolute;left:242px;top:230px;width:158px;height:1px;background:#3c3c3c;"></div><div style="left:245.8px;position:absolute;top:187px;font-size:9.3px;line-height:9.3px;color:#1c1c1c;font-weight:normal;white-space:pre;">In</div><div style="position:absolute;left:277px;top:184px;width:1px;height:46px;background:#505050;"></div><div style="left:281.2px;position:absolute;top:187px;font-size:9.3px;line-height:9.3px;color:#1c1c1c;font-weight:normal;white-space:pre;">Data</div><div style="position:absolute;left:347px;top:184px;width:1px;height:46px;background:#505050;"></div><div style="left:351.3px;position:absolute;top:187px;font-size:9.3px;line-height:9.3px;color:#1c1c1c;font-weight:normal;white-space:pre;">Sender</div><div style="left:245.8px;position:absolute;top:203px;font-size:9.3px;line-height:9.3px;color:#1c1c1c;font-weight:normal;white-space:pre;width:31.399999999999977px;overflow:hidden;">collec...</div><div style="left:281.2px;position:absolute;top:203px;font-size:9.3px;line-height:9.3px;color:#1c1c1c;font-weight:normal;white-space:pre;width:66.10000000000002px;overflow:hidden;">OrderedDictio...</div><div style="left:351.3px;position:absolute;top:203px;font-size:9.3px;line-height:9.3px;color:#1c1c1c;font-weight:normal;white-space:pre;width:47.89999999999998px;overflow:hidden;">Get Expe...</div><div style="left:245.8px;position:absolute;top:219px;font-size:9.3px;line-height:9.3px;color:#1c1c1c;font-weight:normal;white-space:pre;width:31.399999999999977px;overflow:hidden;">key</div><div style="left:281.2px;position:absolute;top:219px;font-size:9.3px;line-height:9.3px;color:#1c1c1c;font-weight:normal;white-space:pre;width:66.10000000000002px;overflow:hidden;">expeccoVersion</div><div style="left:351.3px;position:absolute;top:219px;font-size:9.3px;line-height:9.3px;color:#1c1c1c;font-weight:normal;white-space:pre;width:47.89999999999998px;overflow:hidden;"></div><div style="position:absolute;left:398px;top:184px;width:2px;height:15px;background:#606060;"></div><div style="position:absolute;left:405px;top:198px;width:192px;height:87px;background:#fff;"></div><div style="position:absolute;left:405px;top:198px;width:192px;height:1px;background:#3c3c3c;"></div><div style="position:absolute;left:405px;top:214px;width:192px;height:1px;background:#3c3c3c;"></div><div style="left:408.3px;position:absolute;top:187px;font-size:9.3px;line-height:9.3px;color:#1c1c1c;font-weight:normal;white-space:pre;">Out</div><div style="position:absolute;left:485px;top:184px;width:1px;height:30px;background:#505050;"></div><div style="left:489.2px;position:absolute;top:187px;font-size:9.3px;line-height:9.3px;color:#1c1c1c;font-weight:normal;white-space:pre;">Data</div><div style="left:408.3px;position:absolute;top:203px;font-size:9.3px;line-height:9.3px;color:#1c1c1c;font-weight:normal;white-space:pre;width:76.89999999999998px;overflow:hidden;">element</div><div style="left:489.2px;position:absolute;top:203px;font-size:9.3px;line-height:9.3px;color:#1c1c1c;font-weight:normal;white-space:pre;width:107.59999999999997px;overflow:hidden;">18.1.0.10112</div><svg style="position:absolute;left:407px;top:280.5px" width="4" height="5" viewBox="0 0 4 5"><path d="M3.2 0.5 L0.8 2.5 L3.2 4.5 Z" fill="#444"/></svg><svg style="position:absolute;left:416.5px;top:280.5px" width="4" height="5" viewBox="0 0 4 5"><path d="M0.8 0.5 L3.2 2.5 L0.8 4.5 Z" fill="#444"/></svg><div style="position:absolute;left:424px;top:281px;width:123px;height:4px;background:#a9a9a9;border-radius:2px;"></div><div style="left:320.0px;width:200px;text-align:center;position:absolute;top:294px;font-size:9.54px;line-height:9.54px;color:#1c1c1c;font-weight:normal;white-space:pre;">No Value Selected</div><div style="left:253.8px;position:absolute;top:309px;font-size:9.27px;line-height:9.27px;color:#1c1c1c;font-weight:normal;white-space:pre;">Inst &amp; Pseudo Slots</div><div style="position:absolute;left:242px;top:320px;width:104px;height:51px;background:#fff;"></div><div style="position:absolute;left:351px;top:320px;width:246px;height:52px;background:#fff;"></div><div style="position:absolute;left:352px;top:322px;width:1px;height:7px;background:#777;"></div><div style="position:absolute;left:282px;top:375px;width:74px;height:13px;background:linear-gradient(#d4e9fb,#a9d0f2);border:1px solid #9cc0e0;box-sizing:border-box;border-radius:3px;"></div><div style="left:284.0px;width:70px;text-align:center;position:absolute;top:378px;font-size:9.58px;line-height:9.58px;color:#8c9cac;font-weight:normal;white-space:pre;">Accept</div><div style="position:absolute;left:359px;top:375px;width:73px;height:13px;background:linear-gradient(#fdfdfd,#f1f1f1);border:1px solid #c4c4c4;box-sizing:border-box;border-radius:3px;"></div><div style="left:360.6px;width:70px;text-align:center;position:absolute;top:378px;font-size:9.35px;line-height:9.35px;color:#9a9a9a;font-weight:normal;white-space:pre;">Discard</div><div style="position:absolute;left:1px;top:392px;width:589px;height:2px;background:#d4d4d6;"></div><div style="position:absolute;left:285px;top:393px;width:1px;height:13px;background:#e2e2e4;"></div><div style="position:absolute;left:290px;top:393px;width:1px;height:13px;background:#b8b8ba;"></div><div style="position:absolute;left:560px;top:393px;width:1px;height:13px;background:#c8c8ca;"></div><div style="position:absolute;left:575px;top:393px;width:1px;height:13px;background:#c8c8ca;"></div><div style="left:3.3px;position:absolute;top:396px;font-size:9.24px;line-height:9.24px;color:#1c1c1c;font-weight:normal;white-space:pre;">Finished after 78ms.</div><div style="left:292.6px;position:absolute;top:396px;font-size:9.3px;line-height:9.3px;color:#1c1c1c;font-weight:normal;white-space:pre;">Get Expecco Version <b>[modified]</b></div><svg style="position:absolute;left:563px;top:395px" width="9" height="9" viewBox="0 0 9 9"><defs><radialGradient id="gc" cx="0.4" cy="0.35" r="0.7"><stop offset="0" stop-color="#fafafa"/><stop offset="1" stop-color="#a8a8a8"/></radialGradient></defs><circle cx="4.5" cy="4.5" r="4" fill="url(#gc)" stroke="#b0b0b0" stroke-width="0.5"/><rect x="1" y="3.8" width="7" height="1.2" fill="#888"/></svg><svg style="position:absolute;left:592px;top:398px" width="8" height="9" viewBox="0 0 8 9"><path d="M7.5 1 L1 7.5 M7.5 4 L4 7.5" stroke="#aaa" stroke-width="0.7"/></svg><div style="position:absolute;left:0px;top:406px;width:600px;height:1px;background:#d4d4d6;"></div><div style="position:absolute;left:0px;top:407px;width:600px;height:1px;background:#8e8e90;"></div>
</body></html>
